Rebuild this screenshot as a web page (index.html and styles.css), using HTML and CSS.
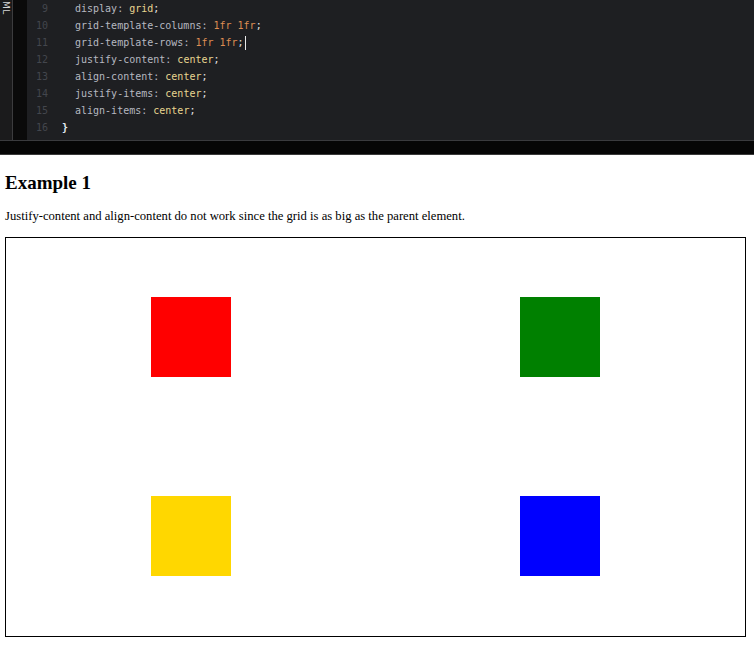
FILE: index.html
```html
<!DOCTYPE html>
<html>
<head>
<meta charset="utf-8">
<link rel="stylesheet" href="styles.css">
</head>
<body>
<div class="editor">
  <div class="side"><span class="side-label">ML</span></div>
  <div class="gap"></div>
  <div class="code">
    <div class="line"><span class="num">9</span><span class="txt ind"><span class="p">display</span><span class="c">: </span><span class="v">grid</span><span class="s">;</span></span></div>
    <div class="line"><span class="num">10</span><span class="txt ind"><span class="p">grid-template-columns</span><span class="c">: </span><span class="n">1fr 1fr</span><span class="s">;</span></span></div>
    <div class="line"><span class="num">11</span><span class="txt ind"><span class="p">grid-template-rows</span><span class="c">: </span><span class="n">1fr 1fr</span><span class="s">;</span><span class="cursor"></span></span></div>
    <div class="line"><span class="num">12</span><span class="txt ind"><span class="p">justify-content</span><span class="c">: </span><span class="v">center</span><span class="s">;</span></span></div>
    <div class="line"><span class="num">13</span><span class="txt ind"><span class="p">align-content</span><span class="c">: </span><span class="v">center</span><span class="s">;</span></span></div>
    <div class="line"><span class="num">14</span><span class="txt ind"><span class="p">justify-items</span><span class="c">: </span><span class="v">center</span><span class="s">;</span></span></div>
    <div class="line"><span class="num">15</span><span class="txt ind"><span class="p">align-items</span><span class="c">: </span><span class="v">center</span><span class="s">;</span></span></div>
    <div class="line"><span class="num">16</span><span class="txt"><span class="b">}</span></span></div>
  </div>
</div>
<div class="bar"></div>
<div class="content">
  <h2 class="title">Example 1</h2>
  <p class="desc">Justify-content and align-content do not work since the grid is as big as the parent element.</p>
  <div class="grid">
    <div class="sq red"></div>
    <div class="sq green"></div>
    <div class="sq gold"></div>
    <div class="sq blue"></div>
  </div>
</div>
</body>
</html>
```
FILE: styles.css
```css
html, body {
  margin: 0;
  padding: 0;
  background: #ffffff;
}
.editor {
  height: 140px;
  display: flex;
  background: #1e1f22;
  overflow: hidden;
  border-bottom: 1px solid #3a3b3e;
}
.side {
  width: 12px;
  background: #1b1b1c;
  border-right: 1px solid #3c3c3e;
  display: flex;
  justify-content: center;
}
.side-label {
  writing-mode: vertical-rl;
  font-family: "DejaVu Sans", sans-serif;
  font-size: 9px;
  color: #d6d6d6;
  margin-top: 1px;
  letter-spacing: 0.5px;
}
.gap {
  width: 14px;
  background: #0a0a0a;
}
.code {
  flex: 1;
  font-family: "DejaVu Sans Mono", monospace;
  font-size: 10px;
}
.line {
  height: 17px;
  line-height: 17px;
  display: flex;
  white-space: pre;
}
.num {
  width: 21px;
  text-align: right;
  color: #43464d;
}
.txt {
  margin-left: 14px;
  display: flex;
  align-items: center;
}
.txt.ind {
  margin-left: 27px;
}
.p { color: #b6b8c0; }
.c { color: #b6b8c0; }
.v { color: #e8d590; }
.n { color: #de8d52; }
.s { color: #e0e0e0; }
.b { color: #e4eef5; font-weight: bold; }
.cursor {
  width: 1px;
  height: 14px;
  background: #e8e8e8;
  margin-left: 1px;
}
.bar {
  height: 13px;
  background: #060606;
  border-bottom: 1px solid #3a3a3a;
}
.content {
  padding: 0 5px;
  font-family: "Liberation Serif", "Times New Roman", serif;
  color: #000;
}
.title {
  margin: 17px 0 0;
  font-size: 19px;
  line-height: 22px;
  font-weight: bold;
}
.desc {
  margin: 15px 0 0;
  font-size: 12.65px;
  line-height: 14px;
}
.grid {
  margin-top: 14px;
  width: 739px;
  height: 398px;
  border: 1px solid #000;
  display: grid;
  grid-template-columns: 1fr 1fr;
  grid-template-rows: 198px 200px;
  justify-items: center;
  align-items: center;
}
.sq {
  width: 80px;
  height: 80px;
}
.red { background: #ff0000; }
.green { background: #008000; }
.gold { background: #ffd700; }
.blue { background: #0000ff; }
```
